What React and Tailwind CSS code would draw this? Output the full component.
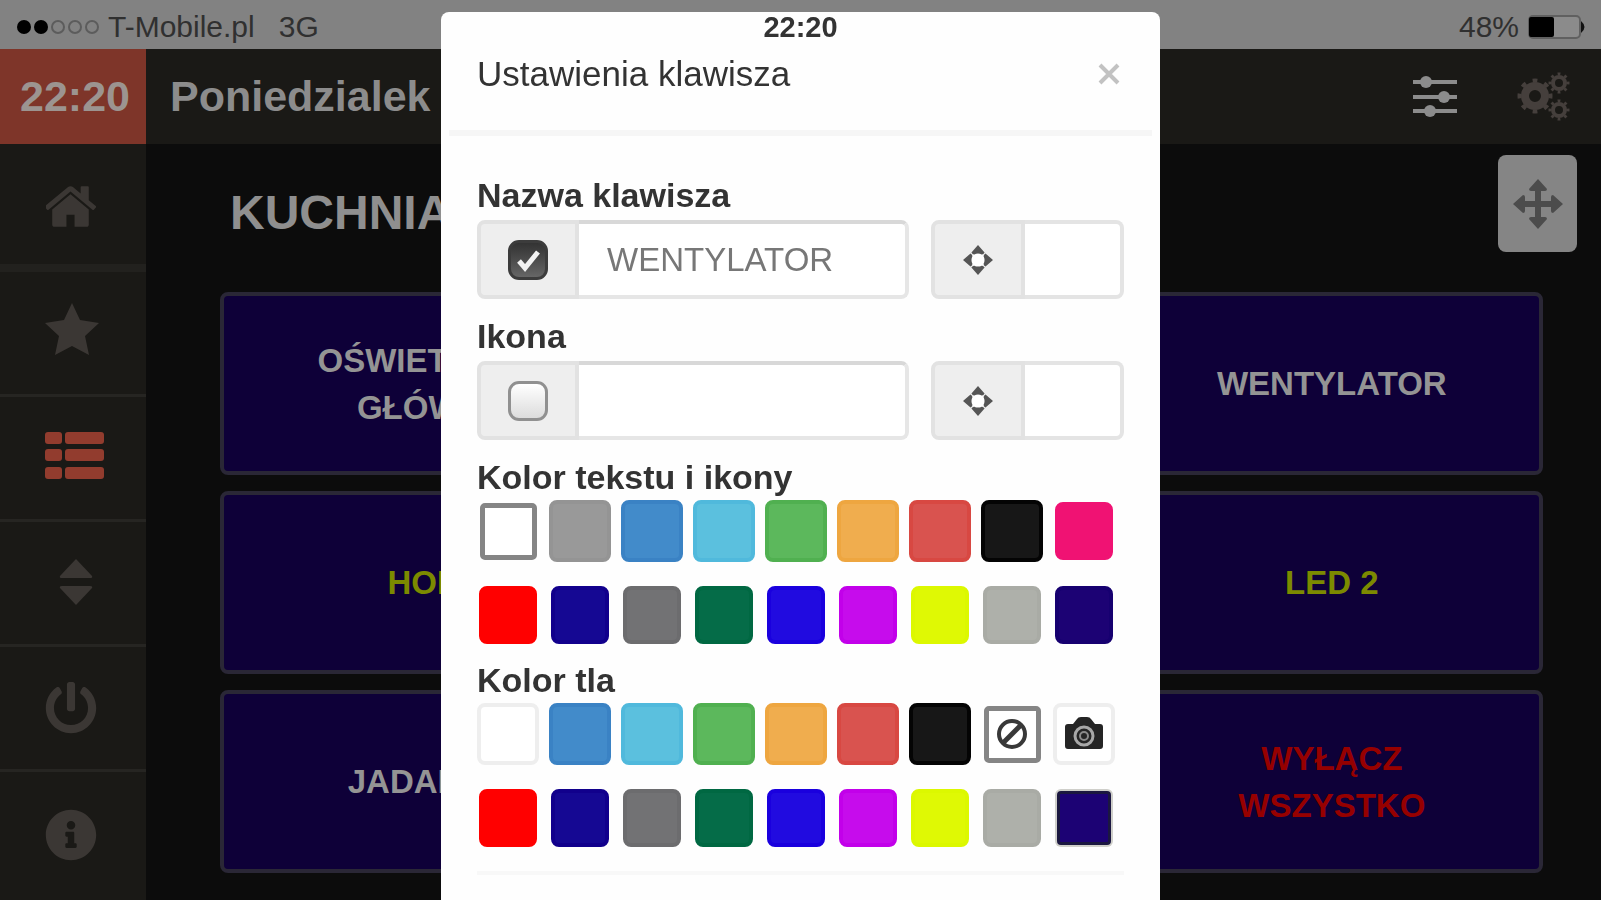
import React, { useState } from "react";
import { FaPowerOff, FaInfoCircle } from "react-icons/fa";

const textColors = [
  { name: "Biały", bg: "bg-white", border: "border-white" },
  { name: "Szary", bg: "bg-[#999999]", border: "border-[#949494]" },
  { name: "Niebieski", bg: "bg-[#428bca]", border: "border-[#3a82c4]" },
  { name: "Błękitny", bg: "bg-[#5bc0de]", border: "border-[#50b9dc]" },
  { name: "Zielony", bg: "bg-[#5cb85c]", border: "border-[#50b050]" },
  { name: "Pomarańczowy", bg: "bg-[#f0ad4e]", border: "border-[#eea640]" },
  { name: "Czerwony", bg: "bg-[#d9534f]", border: "border-[#d84842]" },
  { name: "Czarny", bg: "bg-[#171717]", border: "border-[#040404]" },
  { name: "Różowy", bg: "bg-[#f01273]", border: "border-[#f01273]", small: true },
];

const customColors = [
  { name: "Własny 1", bg: "bg-[#ff0000]", border: "border-[#ff0000]", small: true },
  { name: "Własny 2", bg: "bg-[#150893]", border: "border-[#11008c]", small: true },
  { name: "Własny 3", bg: "bg-[#727274]", border: "border-[#6c6c6e]", small: true },
  { name: "Własny 4", bg: "bg-[#056c48]", border: "border-[#006842]", small: true },
  { name: "Własny 5", bg: "bg-[#210be0]", border: "border-[#1a00de]", small: true },
  { name: "Własny 6", bg: "bg-[#c60cec]", border: "border-[#c200ea]", small: true },
  { name: "Własny 7", bg: "bg-[#dff904]", border: "border-[#dcf800]", small: true },
  { name: "Własny 8", bg: "bg-[#aeb0aa]", border: "border-[#a9aba5]", small: true },
  { name: "Własny 9", bg: "bg-[#1c0274]", border: "border-[#160070]", small: true },
];

const backgroundColors = [
  { name: "Białe tło", bg: "bg-white", border: "border-[#eeeeee]" },
  ...textColors.slice(2, 8),
  { name: "Brak tła", bg: "bg-white", icon: "ban" },
  { name: "Zdjęcie", bg: "bg-white", border: "border-[#eeeeee]", icon: "camera" },
];

const tiles = [
  { lines: ["OŚWIETLENIE", "GŁÓWNE"], color: "text-[#949494]" },
  { lines: ["OKAP"], color: "text-[#949494]" },
  { lines: ["WENTYLATOR"], color: "text-[#949494]" },
  { lines: ["HOL I"], color: "text-[#7c8a00]" },
  { lines: ["LED 1"], color: "text-[#7c8a00]" },
  { lines: ["LED 2"], color: "text-[#7c8a00]" },
  { lines: ["JADALNIA"], color: "text-[#949494]" },
  { lines: ["SALON"], color: "text-[#949494]" },
  { lines: ["WYŁĄCZ", "WSZYSTKO"], color: "text-[#960000]" },
];

const HomeIcon = () => (
  <svg viewBox="60 250 1670 1290" className="w-[53px] h-[43px]" fill="currentColor">
    <path d="M1408 992v480q0 26-19 45t-45 19h-384v-384h-256v384h-384q-26 0-45-19t-19-45v-480q0-1 .5-3t.5-3l575-474 575 474q1 2 1 6zm223-69l-62 74q-8 9-21 11h-3q-13 0-21-7l-692-577-692 577q-12 8-24 7-13-2-21-11l-62-74q-8-10-7-23.5t11-21.5l719-599q32-26 76-26t76 26l244 204v-195q0-14 9-23t23-9h192q14 0 23 9t9 23v408l219 182q10 8 11 21.5t-7 23.5z" />
  </svg>
);

const StarIcon = () => (
  <svg viewBox="0 0 54 52" className="w-[54px] h-[52px]" fill="currentColor">
    <path d="M27 0 L35 17 L54 20 L40 33 L44 52 L27 43 L10 52 L14 33 L0 20 L19 17 Z" />
  </svg>
);

const ListIcon = () => (
  <svg viewBox="0 0 60 48" className="w-[60px] h-12" fill="currentColor">
    {[0, 17, 35].map((y) => (
      <g key={y}>
        <rect x="0" y={y} width="17" height="12" rx="3" />
        <rect x="20" y={y} width="39" height="12" rx="3" />
      </g>
    ))}
  </svg>
);

const SortIcon = () => (
  <svg viewBox="0 0 34 48" className="w-[34px] h-12" fill="currentColor">
    <path d="M17 0 L33 17 Q34 19 31 19 H3 Q0 19 1 17 Z" />
    <path d="M17 46 L33 29 Q34 27 31 27 H3 Q0 27 1 29 Z" />
  </svg>
);

const SlidersIcon = () => (
  <svg viewBox="0 0 44 44" className="w-11 h-11" fill="currentColor">
    <rect x="0" y="5" width="44" height="4" />
    <rect x="0" y="20" width="44" height="4" />
    <rect x="0" y="34" width="44" height="4" />
    <circle cx="13" cy="7" r="6" />
    <circle cx="31" cy="22" r="6" />
    <circle cx="17" cy="36" r="6" />
  </svg>
);

const Gear = ({ cx, cy, r, width, tooth }) => (
  <g fill="none" stroke="currentColor">
    <circle cx={cx} cy={cy} r={r} strokeWidth={width} />
    {/* 8 teeth round the rim */}
    <circle
      cx={cx}
      cy={cy}
      r={r + width / 2 + tooth / 2 - 0.5}
      strokeWidth={tooth}
      pathLength="16"
      strokeDasharray="0.8 1.2"
      strokeDashoffset="0.4"
    />
  </g>
);

const GearsIcon = () => (
  <svg viewBox="0 0 54 50" className="w-[54px] h-[50px]">
    <Gear cx={18} cy={24} r={10} width={8} tooth={4} />
    <Gear cx={42} cy={11} r={6} width={4} tooth={3} />
    <Gear cx={42} cy={38} r={6} width={4} tooth={3} />
  </svg>
);

const MoveIcon = () => (
  <svg viewBox="0 0 50 50" className="w-[50px] h-[50px]" fill="currentColor">
    <path d="M25 0 L34 10 Q34 12 32 12 H28 V22 H38 V18 Q38 16 40 16 L50 25 L40 34 Q38 34 38 32 V28 H28 V38 H32 Q34 38 34 40 L25 50 L16 40 Q16 38 18 38 H22 V28 H12 V32 Q12 34 10 34 L0 25 L10 16 Q12 16 12 18 V22 H22 V12 H18 Q16 12 16 10 Z" />
  </svg>
);

const TargetIcon = () => (
  <svg viewBox="0 0 32 32" className="w-[30px] h-[30px]">
    <circle cx="16" cy="16" r="7" fill="#ffffff" />
    <path
      fill="#555555"
      d="M16 0 L23 8 Q22 10 20 10 Q16 8 12 10 Q10 10 9 8 Z M32 16 L24 23 Q22 22 22 20 Q24 16 22 12 Q22 10 24 9 Z M16 32 L9 24 Q10 22 12 22 Q16 24 20 22 Q22 22 23 24 Z M0 16 L8 9 Q10 10 10 12 Q8 16 10 20 Q10 22 8 23 Z"
    />
  </svg>
);

const BanIcon = () => (
  <svg viewBox="0 0 32 32" className="w-8 h-8" fill="none" stroke="#383838">
    <circle cx="16" cy="16" r="13" strokeWidth="4" />
    <path d="M7 25 L25 7" strokeWidth="5" />
  </svg>
);

const CameraIcon = () => (
  <svg viewBox="0 0 40 34" className="w-10 h-[34px]">
    <path
      fill="#252525"
      d="M4 7 H9 L13 2 Q14 0 17 0 H23 Q26 0 27 2 L31 7 H36 Q39 7 39 10 V29 Q39 32 36 32 H4 Q1 32 1 29 V10 Q1 7 4 7 Z"
    />
    <circle cx="20" cy="19" r="9" fill="none" stroke="#a8a8a8" strokeWidth="3" />
    <circle cx="20" cy="19" r="4" fill="none" stroke="#8a8a8a" strokeWidth="2" />
  </svg>
);

const BatteryIcon = () => (
  <svg viewBox="0 0 60 26" className="w-[60px] h-[26px]">
    <rect x="2" y="2" width="51" height="22" rx="4" fill="#8b8b8b" stroke="#606060" strokeWidth="2" />
    <rect x="2" y="3" width="25" height="20" rx="2" fill="#000000" />
    <path d="M54 7 Q61 13 54 19 Z" fill="#111111" />
  </svg>
);

const StatusBar = () => (
  <div className="grid grid-cols-3 items-center h-[49px] pb-1 pt-2 bg-[#828282] text-[#303030] text-[30px] leading-9">
    <div className="flex items-center gap-2 pl-4">
      <svg viewBox="0 0 84 16" className="w-[84px] h-4">
        <circle cx="8" cy="8" r="7" fill="#000000" />
        <circle cx="25" cy="8" r="7" fill="#000000" />
        {[42, 59, 76].map((x) => (
          <circle key={x} cx={x} cy="8" r="6" fill="none" stroke="#5c5c5c" strokeWidth="2" />
        ))}
      </svg>
      <span>T-Mobile.pl</span>
      <span className="pl-4">3G</span>
    </div>
    <div className="relative z-20 text-center text-[29px] font-bold text-[#333333]">22:20</div>
    <div className="flex items-center justify-end gap-2 pr-[14px]">
      <span>48%</span>
      <BatteryIcon />
    </div>
  </div>
);

const Sidebar = () => {
  const item = "flex w-full h-[125px] items-center border-b-3 border-[#262522] cursor-pointer";
  return (
    <nav className="w-[146px] shrink-0 bg-[#1a1916] text-[#3b3734]">
      <button
        aria-label="Dom"
        className="flex w-full h-32 pl-[46px] pt-1 items-center border-b-8 border-[#22211e] cursor-pointer"
      >
        <HomeIcon />
      </button>
      <button aria-label="Ulubione" className={`${item} pl-[45px] pb-2`}>
        <StarIcon />
      </button>
      <button aria-label="Lista" className={`${item} pl-[45px] pb-1 text-[#923c2e]`}>
        <ListIcon />
      </button>
      <button aria-label="Rolety" className={`${item} pl-[59px]`}>
        <SortIcon />
      </button>
      <button aria-label="Zasilanie" className={`${item} pl-[45px]`}>
        <FaPowerOff className="w-[52px] h-[52px]" />
      </button>
      <button aria-label="Informacje" className="flex w-full h-[125px] pl-[45px] items-center cursor-pointer">
        <FaInfoCircle className="w-[52px] h-[52px]" />
      </button>
    </nav>
  );
};

const Field = ({ id, label, checked, onToggle, value, onChange }) => (
  <div className="mb-4">
    <label htmlFor={id} className="block mb-1 text-[34px] leading-[42px] font-bold text-[#333333]">
      {label}
    </label>
    <div className="flex gap-[22px]">
      <div className="flex flex-1 h-[79px] min-w-0">
        <div className="flex items-center justify-center w-[102px] shrink-0 bg-[#eeeeee] border-4 border-[#e2e2e2] rounded-l-lg">
          <div className="relative w-10 h-10">
            <input
              type="checkbox"
              aria-label={`${label} - włącz`}
              checked={checked}
              onChange={onToggle}
              className="block appearance-none w-10 h-10 rounded-[11px] border-3 border-[#909090] bg-linear-to-b from-white to-[#dcdcdc] checked:border-[#3c3c3c] checked:from-[#333333] checked:to-[#666666]"
            />
            {checked && (
              <svg viewBox="0 0 40 40" className="absolute inset-0 w-10 h-10 pointer-events-none">
                <path d="M11 21 L17 28 L30 12" fill="none" stroke="#f2f2f2" strokeWidth="5" />
              </svg>
            )}
          </div>
        </div>
        <input
          id={id}
          type="text"
          value={value}
          onChange={onChange}
          className="flex-1 min-w-0 pl-7 pr-4 text-[33px] text-[#777777] bg-white border-4 border-l-0 border-[#e6e6e6] border-t-[#d8d8d8] rounded-r-lg outline-none"
        />
      </div>
      <div className="flex w-[193px] h-[79px]">
        <button
          aria-label="Pozycja"
          className="flex items-center justify-center w-[94px] shrink-0 bg-[#eeeeee] border-4 border-[#e2e2e2] rounded-l-lg cursor-pointer"
        >
          <TargetIcon />
        </button>
        <input
          type="text"
          aria-label={`${label} - pozycja`}
          className="flex-1 min-w-0 px-3 text-[33px] text-[#777777] bg-white border-4 border-l-0 border-[#e4e4e4] rounded-r-lg outline-none"
        />
      </div>
    </div>
  </div>
);

const swatchStyle = (color, active) => {
  if (active && color.name === "Własny 9") {
    return "w-[54px] h-[54px] border-3 border-[#1b1740] ring-2 ring-[#cfcfca] rounded-sm";
  }
  if (active || color.icon === "ban") {
    return "w-[57px] h-[57px] border-5 border-[#858585] rounded-[5px]";
  }
  return `border-4 rounded-lg ${color.border} ${color.small ? "w-[58px] h-[58px]" : "w-[62px] h-[62px]"}`;
};

const Palette = ({ label, colors, selected, onSelect }) => (
  <div role="group" aria-label={label} className="mb-[13px]">
    <h5 className="mb-0.5 text-[34px] leading-[42px] font-bold text-[#333333]">{label}</h5>
    <div className="grid grid-cols-[repeat(9,62px)] gap-x-[10px] gap-y-[22px]">
      {colors.map((color) => (
        <div key={color.name} className="flex items-center justify-center w-[62px] h-[62px]">
          <button
            aria-label={color.name}
            onClick={() => onSelect(color.name)}
            className={`flex items-center justify-center cursor-pointer ${color.bg} ${swatchStyle(
              color,
              selected === color.name
            )}`}
          >
            {color.icon === "ban" && <BanIcon />}
            {color.icon === "camera" && <CameraIcon />}
          </button>
        </div>
      ))}
    </div>
  </div>
);

const KeySettings = () => {
  const [name, setName] = useState("WENTYLATOR");
  const [icon, setIcon] = useState("");
  const [nameOn, setNameOn] = useState(true);
  const [iconOn, setIconOn] = useState(false);
  const [textColor, setTextColor] = useState("Biały");
  const [background, setBackground] = useState("Własny 9");

  return (
    <div className="fixed inset-x-0 top-3 bottom-0 z-10 flex justify-center">
      <div
        role="dialog"
        aria-label="Ustawienia klawisza"
        className="w-[719px] max-w-full overflow-hidden bg-[#fefefe] rounded-t-lg"
      >
        <div className="flex justify-between mx-2 px-7 pt-10 pb-[34px] border-b-6 border-[#f6f6f6]">
          <h4 className="text-[35px] leading-[44px] text-[#333333]">Ustawienia klawisza</h4>
          <button aria-label="Zamknij" className="pr-1 cursor-pointer">
            <svg viewBox="0 0 22 22" className="w-[22px] h-[22px]" fill="none" stroke="#c2c2c2" strokeWidth="4">
              <path d="M2 2 L20 20 M20 2 L2 20" />
            </svg>
          </button>
        </div>
        <div className="px-9 pt-[38px]">
          <Field
            id="key-name"
            label="Nazwa klawisza"
            checked={nameOn}
            onToggle={() => setNameOn(!nameOn)}
            value={name}
            onChange={(e) => setName(e.target.value)}
          />
          <Field
            id="key-icon"
            label="Ikona"
            checked={iconOn}
            onToggle={() => setIconOn(!iconOn)}
            value={icon}
            onChange={(e) => setIcon(e.target.value)}
          />
          <Palette
            label="Kolor tekstu i ikony"
            colors={[...textColors, ...customColors]}
            selected={textColor}
            onSelect={setTextColor}
          />
          <Palette
            label="Kolor tla"
            colors={[...backgroundColors, ...customColors]}
            selected={background}
            onSelect={setBackground}
          />
          <hr className="mt-[22px] border-t-4 border-[#f8f8f8]" />
        </div>
      </div>
    </div>
  );
};

const App = () => {
  return (
    <div className="flex flex-col min-h-screen bg-[#0c0c0c] font-['Liberation_Sans',Arial,sans-serif]">
      <StatusBar />
      <header className="flex items-center h-[95px] bg-[#1a1916] text-[43px] font-bold text-[#8c8c8c]">
        <div className="flex items-center justify-center w-[146px] h-full pl-1 bg-[#7e3529] text-[#9c9490]">22:20</div>
        <div className="flex-1 pl-6">Poniedzialek</div>
        <button aria-label="Filtry" className="mr-[60px] cursor-pointer">
          <SlidersIcon />
        </button>
        <button aria-label="Ustawienia" className="mr-[30px] text-[#453f3c] cursor-pointer">
          <GearsIcon />
        </button>
      </header>
      <div className="flex flex-1">
        <Sidebar />
        <main className="flex-1 pt-[11px]">
          <div className="flex items-end justify-between pl-[84px] pr-6">
            <h1 className="text-[48px] leading-[78px] font-bold text-[#8f8f8f]">KUCHNIA</h1>
            <button
              aria-label="Przesuń"
              className="flex items-center justify-center w-[79px] h-[97px] rounded-lg bg-[#858585] text-[#4c4c4c] cursor-pointer"
            >
              <MoveIcon />
            </button>
          </div>
          <div className="grid grid-cols-3 gap-x-7 gap-y-4 mt-10 pl-[74px] pr-[58px]">
            {tiles.map((tile) => (
              <button
                key={tile.lines[0]}
                className={`h-[183px] border-4 border-[#2a2736] rounded-lg bg-[#0e0038] text-[33px] leading-[47px] font-bold cursor-pointer ${tile.color}`}
              >
                {tile.lines.map((line) => (
                  <span key={line} className="block">
                    {line}
                  </span>
                ))}
              </button>
            ))}
          </div>
        </main>
      </div>
      <KeySettings />
    </div>
  );
};

export default App;
